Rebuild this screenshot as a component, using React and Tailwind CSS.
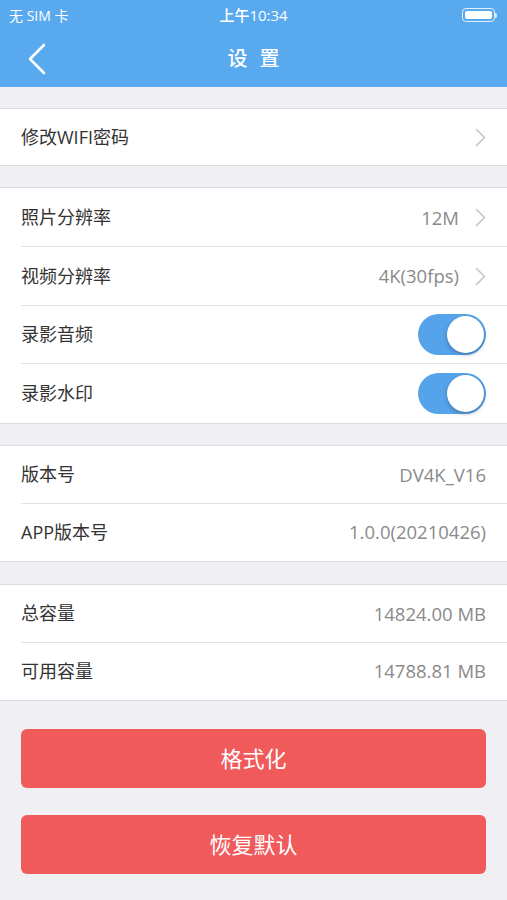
import React, { useState } from 'react';

const font = { fontFamily: '"Open Sans", "Noto Sans CJK SC", sans-serif' };

const Chevron = () => (
  <svg width="11" height="19" viewBox="0 0 11 19" fill="none" className="ml-[16px]">
    <path d="M1.5 1.5L9.5 9.5L1.5 17.5" stroke="#c4c4c8" strokeWidth="1.6" strokeLinecap="round" strokeLinejoin="round" />
  </svg>
);

const Toggle = ({ on, onClick }) => (
  <button
    onClick={onClick}
    className={`relative w-[68px] h-[41px] rounded-full transition-colors ${on ? 'bg-[#55a3ea]' : 'bg-[#e5e5ea]'}`}
  >
    <span
      className={`absolute top-[2px] w-[37px] h-[37px] rounded-full bg-white shadow-[0_2px_4px_rgba(0,0,0,0.25)] transition-all ${on ? 'left-[29px]' : 'left-[2px]'}`}
    />
  </button>
);

const Row = ({ label, value, arrow, last, right, h = 'h-[57.5px]' }) => (
  <div className={`relative ${h} flex items-center pl-[21px] pr-[21px]`}>
    <span className="text-[18px] text-[#333333] flex-1">{label}</span>
    {value && <span className="text-[18.5px] text-[#8a8a8a]">{value}</span>}
    {arrow && <Chevron />}
    {right}
    {!last && <div className="absolute left-[21px] right-0 bottom-0 h-px bg-[#e3e3e6]" />}
  </div>
);

const Section = ({ children }) => (
  <div className="bg-white border-y border-[#dcdce0]">{children}</div>
);

export default function App() {
  const [audio, setAudio] = useState(true);
  const [mark, setMark] = useState(true);

  return (
    <div className="w-[507px] h-[900px] bg-[#efeff4] overflow-hidden" style={font}>
      <div className="bg-[#58a9ee] h-[87px] text-white">
        <div className="h-[30px] flex items-center justify-between px-[9px] relative">
          <span className="text-[14px]">无 SIM 卡</span>
          <span className="absolute left-1/2 -translate-x-1/2 text-[15px] font-medium">上午10:34</span>
          <div className="flex items-center mr-[1px]">
            <div className="w-[33px] h-[14px] rounded-[4px] border border-white/80 p-[2px]">
              <div className="w-full h-full bg-white rounded-[2px]" />
            </div>
            <div className="w-[2px] h-[5px] bg-white/80 rounded-r-sm" />
          </div>
        </div>
        <div className="h-[57px] flex items-center relative">
          <svg width="20" height="32" viewBox="0 0 20 32" className="ml-[27px]" fill="none">
            <path d="M17 2L3 16L17 30" stroke="white" strokeWidth="2.6" strokeLinecap="round" strokeLinejoin="round" />
          </svg>
          <span className="absolute left-1/2 -translate-x-1/2 text-[20px] tracking-[12px] pl-[12px] font-medium">设置</span>
        </div>
      </div>

      <div className="pt-[21px] flex flex-col">
        <Section>
          <Row label="修改WIFI密码" arrow last h="h-[56px]" />
        </Section>
        <div className="h-[21px]" />
        <Section>
          <Row label="照片分辨率" value="12M" arrow h="h-[58.75px]" />
          <Row label="视频分辨率" value="4K(30fps)" arrow h="h-[58.75px]" />
          <Row label="录影音频" h="h-[58.75px]" right={<Toggle on={audio} onClick={() => setAudio(!audio)} />} />
          <Row label="录影水印" h="h-[58.75px]" right={<Toggle on={mark} onClick={() => setMark(!mark)} />} last />
        </Section>
        <div className="h-[21px]" />
        <Section>
          <Row label="版本号" value="DV4K_V16" />
          <Row label="APP版本号" value="1.0.0(20210426)" last />
        </Section>
        <div className="h-[22px]" />
        <Section>
          <Row label="总容量" value="14824.00 MB" />
          <Row label="可用容量" value="14788.81 MB" last />
        </Section>
      </div>

      <div className="px-[21px] pt-[28px] flex flex-col gap-[27px]">
        <button className="h-[59px] rounded-[6px] bg-[#f05a5b] text-white text-[22px]">格式化</button>
        <button className="h-[59px] rounded-[6px] bg-[#f05a5b] text-white text-[22px]">恢复默认</button>
      </div>
    </div>
  );
}
